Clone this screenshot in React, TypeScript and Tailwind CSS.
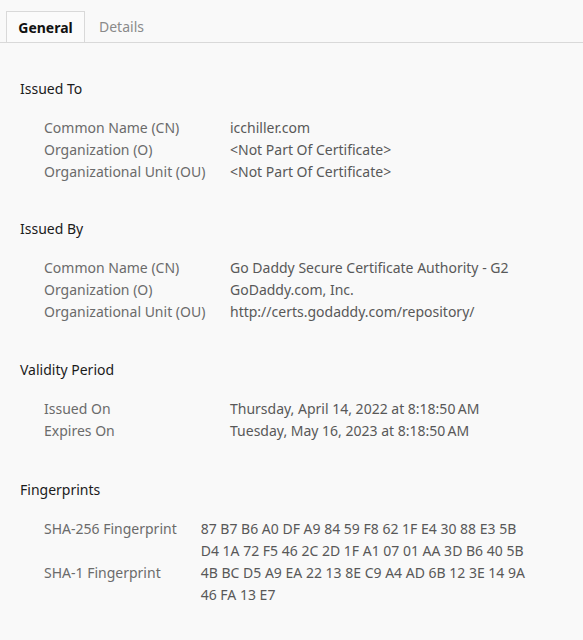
import React from 'react'

type Row = { label: string; value: string[] }

const sections: { title: string; gap: string; wide: boolean; rows: Row[] }[] = [
  {
    title: 'Issued To',
    gap: 'mt-0',
    wide: true,
    rows: [
      { label: 'Common Name (CN)', value: ['icchiller.com'] },
      { label: 'Organization (O)', value: ['<Not Part Of Certificate>'] },
      { label: 'Organizational Unit (OU)', value: ['<Not Part Of Certificate>'] },
    ],
  },
  {
    title: 'Issued By',
    gap: 'mt-[35px]',
    wide: true,
    rows: [
      { label: 'Common Name (CN)', value: ['Go Daddy Secure Certificate Authority - G2'] },
      { label: 'Organization (O)', value: ['GoDaddy.com, Inc.'] },
      { label: 'Organizational Unit (OU)', value: ['http://certs.godaddy.com/repository/'] },
    ],
  },
  {
    title: 'Validity Period',
    gap: 'mt-[36px]',
    wide: true,
    rows: [
      { label: 'Issued On', value: ['Thursday, April 14, 2022 at 8:18:50\u202FAM'] },
      { label: 'Expires On', value: ['Tuesday, May 16, 2023 at 8:18:50\u202FAM'] },
    ],
  },
  {
    title: 'Fingerprints',
    gap: 'mt-[37px]',
    wide: false,
    rows: [
      {
        label: 'SHA-256 Fingerprint',
        value: ['87 B7 B6 A0 DF A9 84 59 F8 62 1F E4 30 88 E3 5B', 'D4 1A 72 F5 46 2C 2D 1F A1 07 01 AA 3D B6 40 5B'],
      },
      { label: 'SHA-1 Fingerprint', value: ['4B BC D5 A9 EA 22 13 8E C9 A4 AD 6B 12 3E 14 9A', '46 FA 13 E7'] },
    ],
  },
]

const App = () => {
  return (
    <div className="min-h-[640px] bg-[#f9f9f9] font-['Noto_Sans',sans-serif] text-[14px]">
      <div className="flex pl-[6px] pt-[11px] border-b border-[#d9d9d9]">
        <div className="-mb-px h-[31px] w-[79px] border border-b-0 border-[#d9d9d9] bg-[#fbfbfb] flex items-center justify-center font-bold text-[#111]">
          General
        </div>
        <div className="h-[31px] px-[14px] flex items-center text-[#8a8a8a]">Details</div>
      </div>

      <div className="pt-[35px] pl-[20px]">
        {sections.map((s) => (
          <div key={s.title} className={s.gap}>
            <h2 className="leading-[22px] text-[#1b1b1b]">{s.title}</h2>
            <table className="mt-[17px] ml-[24px] border-collapse leading-[22px]">
              <tbody>
                {s.rows.map((r) => (
                  <tr key={r.label} className="align-top">
                    <td className={`pr-[24px] text-[#6b6b6b] whitespace-nowrap ${s.wide ? 'w-[186px]' : ''}`}>{r.label}</td>
                    <td className="text-[#585858]">
                      {r.value.map((v) => (
                        <div key={v}>{v}</div>
                      ))}
                    </td>
                  </tr>
                ))}
              </tbody>
            </table>
          </div>
        ))}
      </div>
    </div>
  )
}

export default App
